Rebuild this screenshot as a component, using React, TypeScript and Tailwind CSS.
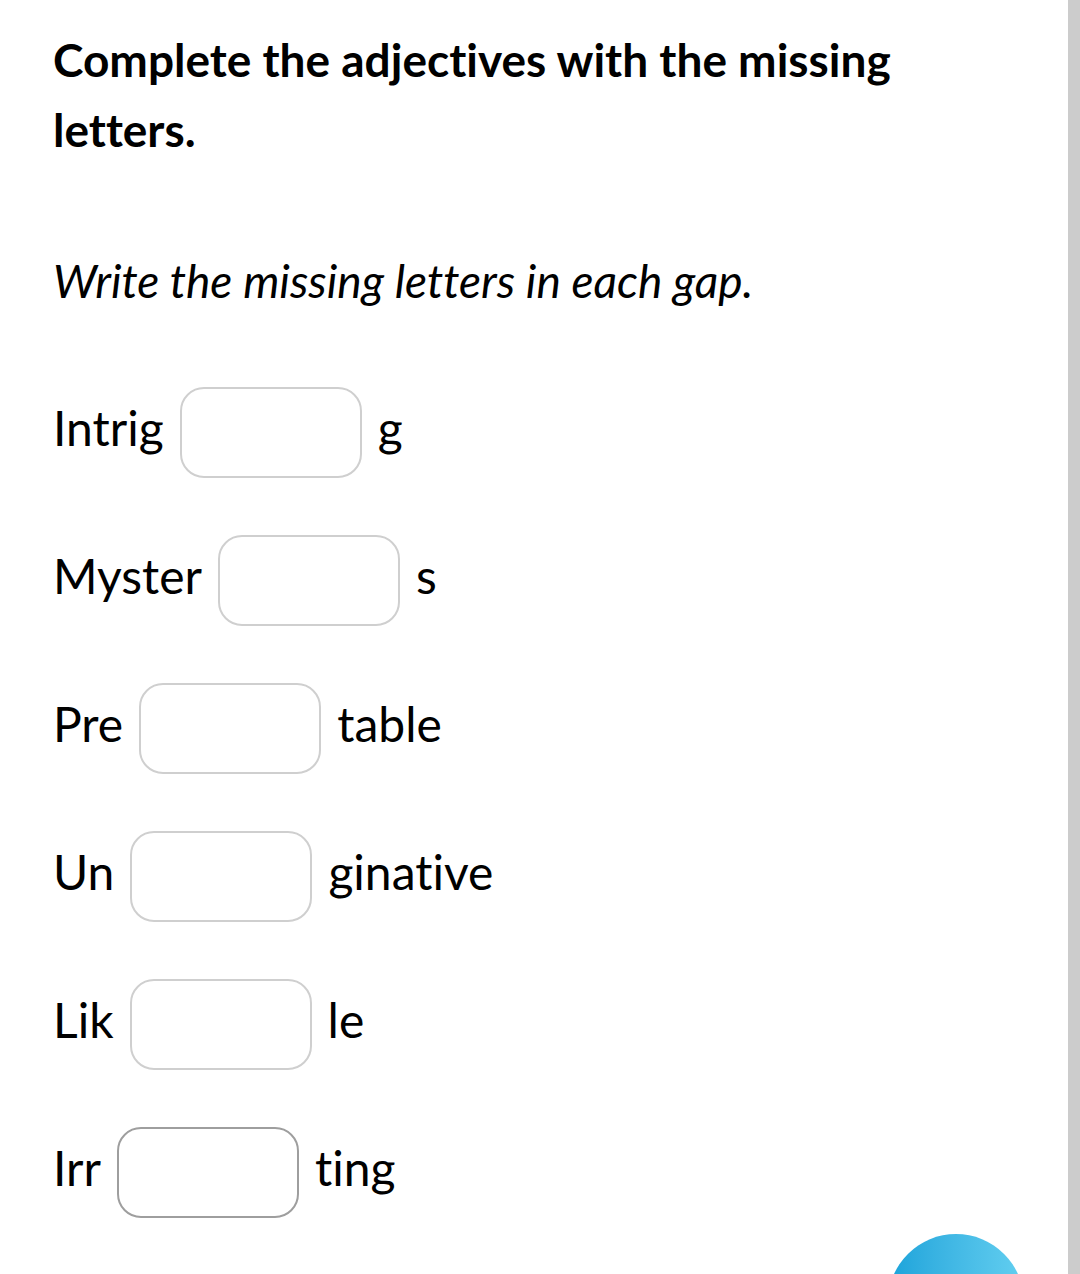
import React from 'react';

const rows = [
  { before: 'Intrig', after: 'g' },
  { before: 'Myster', after: 's' },
  { before: 'Pre', after: 'table' },
  { before: 'Un', after: 'ginative' },
  { before: 'Lik', after: 'le' },
  { before: 'Irr', after: 'ting', active: true },
];

export default function App() {
  return (
    <div
      className="relative h-[1274px] w-[1080px] overflow-hidden bg-white text-black [font-variant-ligatures:none]"
      style={{ fontFamily: 'Lato, "Noto Sans", sans-serif' }}
    >
      <div className="flex h-full">
        <main className="flex-1 pl-[53px] pt-[25px]">
          <h1 className="w-[960px] text-[46px] font-bold leading-[70px]">
            Complete the adjectives with the missing letters.
          </h1>

          <p className="mt-[88px] text-[46px] italic leading-[55px]">Write the missing letters in each gap.</p>

          {/* Gap rows */}
          <div className="mt-[79px] flex flex-col gap-[57px]">
            {rows.map((row) => (
              <div key={row.before} className="flex h-[91px] items-center gap-[16px] text-[48px] leading-none">
                <span className="mb-[10px]">{row.before}</span>
                <div
                  className={`h-[91px] w-[182px] rounded-[24px] border-2 bg-white ${
                    row.active ? 'border-[#9e9e9e]' : 'border-[#cfcfcf]'
                  }`}
                />
                <span className="mb-[10px]">{row.after}</span>
              </div>
            ))}
          </div>
        </main>

        {/* Scrollbar */}
        <div className="h-full w-[12px] bg-[#cccccc]" />
      </div>

      {/* Floating button */}
      <div className="absolute left-[888px] top-[1234px] h-[136px] w-[136px] rounded-full bg-gradient-to-r from-[#18a3da] to-[#62cff0]" />
    </div>
  );
}
